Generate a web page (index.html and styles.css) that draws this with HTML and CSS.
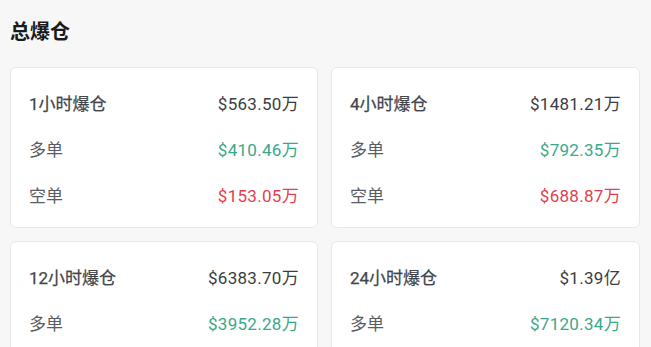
FILE: index.html
```html
<!DOCTYPE html>
<html lang="zh">
<head>
<meta charset="utf-8">
<link rel="stylesheet" href="styles.css">
</head>
<body>
<div class="page">
  <h1 class="title">总爆仓</h1>
  <div class="grid">
    <div class="card">
      <div class="row"><span class="label main">1小时爆仓</span><span class="val">$563.50万</span></div>
      <div class="row"><span class="label">多单</span><span class="val up">$410.46万</span></div>
      <div class="row"><span class="label">空单</span><span class="val down">$153.05万</span></div>
    </div>
    <div class="card">
      <div class="row"><span class="label main">4小时爆仓</span><span class="val">$1481.21万</span></div>
      <div class="row"><span class="label">多单</span><span class="val up">$792.35万</span></div>
      <div class="row"><span class="label">空单</span><span class="val down">$688.87万</span></div>
    </div>
    <div class="card">
      <div class="row"><span class="label main">12小时爆仓</span><span class="val">$6383.70万</span></div>
      <div class="row"><span class="label">多单</span><span class="val up">$3952.28万</span></div>
      <div class="row"><span class="label">空单</span><span class="val down">$2431.42万</span></div>
    </div>
    <div class="card">
      <div class="row"><span class="label main">24小时爆仓</span><span class="val">$1.39亿</span></div>
      <div class="row"><span class="label">多单</span><span class="val up">$7120.34万</span></div>
      <div class="row"><span class="label">空单</span><span class="val down">$6812.55万</span></div>
    </div>
  </div>
</div>
</body>
</html>
```
FILE: styles.css
```css
html, body {
  margin: 0;
  padding: 0;
  background: #f7f7f7;
}
body {
  font-family: Roboto, "Noto Sans CJK SC", sans-serif;
  overflow: hidden;
}
.page {
  padding: 17px 12px 0 10px;
}
.title {
  margin: 0;
  font-size: 20px;
  line-height: 28px;
  font-weight: 700;
  color: #1b1b1b;
  font-family: "Noto Sans CJK SC", sans-serif;
}
.grid {
  margin-top: 22px;
  display: grid;
  grid-template-columns: 308px 309px;
  column-gap: 13px;
  row-gap: 13px;
}
.card {
  background: #fff;
  border: 1px solid #e8e8e8;
  border-radius: 6px;
  padding: 24px 18px 19px 18px;
  display: flex;
  flex-direction: column;
  gap: 22px;
}
.row {
  display: flex;
  justify-content: space-between;
  align-items: center;
  height: 24px;
  font-size: 17px;
  line-height: 24px;
}
.label {
  color: #595d63;
}
.label.main {
  color: #42464c;
  font-weight: 400;
  -webkit-text-stroke: 0.25px #42464c;
}
.val {
  color: #3a3d42;
  letter-spacing: 0.3px;
}
.val.up {
  color: #3aa88a;
}
.val.down {
  color: #e2404e;
}
```
